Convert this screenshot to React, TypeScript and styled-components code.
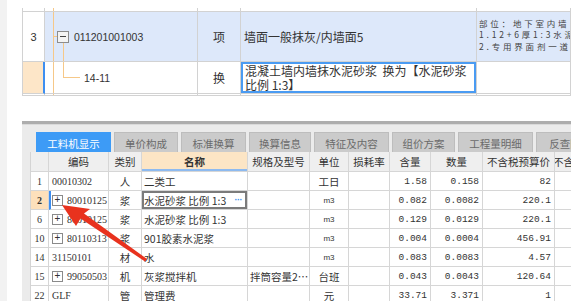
import styled, { createGlobalStyle } from "styled-components";

const Global = createGlobalStyle`
  html, body { margin: 0; padding: 0; background: #fff; }
  body {
    width: 571px;
    height: 301px;
    overflow: hidden;
    font-family: "Noto Sans CJK SC", "Liberation Sans", sans-serif;
    color: #333;
  }
`;

const Page = styled.div`
  position: relative;
  display: flex;
  width: 571px;
  height: 301px;
  overflow: hidden;
`;

const LeftStrip = styled.div`
  width: 7px;
  background: #f2f2f2;
  flex-shrink: 0;
`;

const Main = styled.div`
  flex: 1;
  min-width: 0;
  padding-left: 15px;
  display: flex;
  flex-direction: column;
`;

/* ---------- upper list ---------- */

const TopTable = styled.div`
  margin-top: 8px;
  display: grid;
  grid-template-columns: 22px 153px 43px 236px 1fr;
  grid-template-rows: 4px 50px 32px 2px;
  border-left: 1px solid #d2d2d2;
`;

const TCell = styled.div<{ $bg?: string; $center?: boolean }>`
  box-sizing: border-box;
  border-right: 1px solid #d2d2d2;
  border-bottom: 1px solid #d2d2d2;
  background-color: ${(p) => p.$bg ?? "#fff"};
  display: flex;
  align-items: center;
  justify-content: ${(p) => (p.$center ? "center" : "flex-start")};
  overflow: hidden;
  white-space: nowrap;
  font-size: 12px;
`;

const RowNo = styled(TCell)<{ $marked?: boolean }>`
  justify-content: center;
  font-family: "Liberation Sans", sans-serif;
  font-size: 11px;
  ${(p) => p.$marked && "border-right: 2px solid #3d8ef0;"}
`;

const orange = "#f6c888";

const TreeCell = styled(TCell)<{ $branch?: "open" | "leaf" }>`
  font-family: "Liberation Sans", sans-serif;
  font-size: 10.5px;
  background-image: linear-gradient(${orange}, ${orange}),
    linear-gradient(${orange}, ${orange}),
    linear-gradient(${orange}, ${orange});
  background-repeat: no-repeat;
  ${(p) =>
    p.$branch === "open"
      ? `background-size: 1px 100%, 4px 1px, 1px 19px;
         background-position: 8px 0, 8px 24px, 18px 31px;`
      : p.$branch === "leaf"
      ? `background-size: 1px 100%, 1px 15px, 17px 1px;
         background-position: 8px 0, 18px 0, 18px 15px;
         padding-left: 39px;`
      : `background-size: 1px 100%, 0 0, 0 0;
         background-position: 8px 0, 0 0, 0 0;`}
`;

const MinusBox = styled.span`
  box-sizing: border-box;
  flex-shrink: 0;
  width: 12px;
  height: 12px;
  margin: 0 5px 0 12px;
  border: 1px solid #8c8c8c;
  background: #f4f4f4;
  display: flex;
  align-items: center;
  justify-content: center;
  &::after {
    content: "";
    width: 6px;
    height: 1px;
    background: #444;
  }
`;

const NameEdit = styled(TCell)`
  box-shadow: inset 0 0 0 2px #4a9bf2;
  white-space: normal;
  font-size: 12px;
  line-height: 14px;
  padding: 1px 4px;
  align-items: center;
`;

const Desc = styled(TCell)`
  flex-direction: column;
  align-items: flex-start;
  justify-content: center;
  padding: 0 0 3px 2px;
  font-size: 8.5px;
  line-height: 11.5px;
  letter-spacing: 2.8px;
  color: #444;
`;

/* ---------- lower panel ---------- */

const Panel = styled.div`
  margin-top: 25px;
  flex: 1;
  min-height: 0;
  background: #ebebeb;
  border-top: 3px solid #adadad;
  display: flex;
  flex-direction: column;
  overflow: hidden;
`;

const TabBar = styled.div`
  box-sizing: border-box;
  height: 28px;
  padding: 7px 0 0 14px;
  display: flex;
  gap: 3px;
  border-top: 1px solid #dadada;
`;

const Tab = styled.div<{ $w: number; $active?: boolean }>`
  box-sizing: border-box;
  flex-shrink: 0;
  width: ${(p) => p.$w}px;
  height: 21px;
  display: flex;
  align-items: center;
  justify-content: center;
  font-size: 10.5px;
  background: ${(p) => (p.$active ? "#3d9bf6" : "#cbcbcb")};
  color: ${(p) => (p.$active ? "#fff" : "#6a6a6a")};
  border: 1px solid ${(p) => (p.$active ? "#3d9bf6" : "#bdbdbd")};
  border-bottom: none;
`;

const Grid = styled.div`
  margin-left: 8px;
  display: grid;
  grid-template-columns: 18px 60px 33px 106px 62px 39px 41px 41px 52px 72px 60px;
  grid-auto-rows: 19px;
  grid-template-rows: 20px;
  background: #fff;
  border-left: 1px solid #d4d4d4;
  width: max-content;
`;

const GCell = styled.div<{ $align?: "left" | "center" | "right"; $bg?: string }>`
  box-sizing: border-box;
  border-right: 1px solid #d6d6d6;
  border-bottom: 1px solid #d6d6d6;
  background: ${(p) => p.$bg ?? "#fff"};
  display: flex;
  align-items: center;
  justify-content: ${(p) =>
    p.$align === "right" ? "flex-end" : p.$align === "center" ? "center" : "flex-start"};
  padding: 0 2px;
  overflow: hidden;
  white-space: nowrap;
  font-size: 10.5px;
  color: #333;
`;

const Head = styled(GCell)<{ $sel?: boolean }>`
  justify-content: center;
  background: ${(p) => (p.$sel ? "#fce5c5" : "#efefef")};
  font-weight: ${(p) => (p.$sel ? 700 : 400)};
  ${(p) => p.$sel && "box-shadow: inset 0 -2px 0 #8dbaf0;"}
`;

const Num = styled(GCell)`
  justify-content: flex-end;
  font-family: "Liberation Mono", monospace;
  font-size: 9.5px;
  padding-right: 3px;
`;

const RowNum = styled(GCell)<{ $cur?: boolean }>`
  justify-content: center;
  padding: 0;
  font-family: "Liberation Serif", serif;
  font-size: 10px;
  background: ${(p) => (p.$cur ? "#fde0bb" : "#fff")};
  font-weight: ${(p) => (p.$cur ? 700 : 400)};
`;

const CodeCell = styled(GCell)<{ $cur?: boolean }>`
  font-family: "Liberation Serif", serif;
  font-size: 10px;
  padding-left: ${(p) => (p.$cur ? "1px" : "3px")};
  ${(p) => p.$cur && "border-left: 2px solid #3d8ef0;"}
`;

const PlusBox = styled.span`
  box-sizing: border-box;
  flex-shrink: 0;
  width: 11px;
  height: 11px;
  margin-right: 4px;
  border: 1px solid #8a8a8a;
  display: flex;
  align-items: center;
  justify-content: center;
  font-family: "Liberation Sans", sans-serif;
  font-size: 10px;
  line-height: 1;
  color: #333;
`;

const NameCell = styled(GCell)<{ $sel?: boolean }>`
  justify-content: space-between;
  ${(p) => p.$sel && "box-shadow: inset 0 0 0 2px #7b7b7b;"}
`;

const Dots = styled.span`
  color: #3d8ef0;
  font-family: "Liberation Sans", sans-serif;
  font-weight: 700;
  font-size: 9px;
  letter-spacing: -0.5px;
  margin-right: 3px;
`;

const Unit = styled(GCell)<{ $small?: boolean }>`
  justify-content: center;
  font-size: ${(p) => (p.$small ? "8px" : "10.5px")};
  font-family: ${(p) =>
    p.$small ? '"Liberation Sans", sans-serif' : '"Noto Sans CJK SC", sans-serif'};
`;

const ArrowLayer = styled.svg`
  position: absolute;
  left: 0;
  top: 0;
  pointer-events: none;
`;

const tabs: [string, number][] = [
  ["工料机显示", 75],
  ["单价构成", 64],
  ["标准换算", 65],
  ["换算信息", 62],
  ["特征及内容", 75],
  ["组价方案", 63],
  ["工程量明细", 75],
  ["反查图形工程量", 100],
];

const heads = [
  "",
  "编码",
  "类别",
  "名称",
  "规格及型号",
  "单位",
  "损耗率",
  "含量",
  "数量",
  "不含税预算价",
  "不含税市场价",
];

type Item = {
  no: string;
  code: string;
  plus?: boolean;
  kind: string;
  name: string;
  spec?: string;
  unit: string;
  qty: string;
  amount: string;
  price: string;
};

const items: Item[] = [
  { no: "1", code: "00010302", kind: "人", name: "二类工", unit: "工日", qty: "1.58", amount: "0.158", price: "82" },
  { no: "2", code: "80010125", plus: true, kind: "浆", name: "水泥砂浆 比例 1:3", unit: "m3", qty: "0.082", amount: "0.0082", price: "220.1" },
  { no: "6", code: "80010125", plus: true, kind: "浆", name: "水泥砂浆 比例 1:3", unit: "m3", qty: "0.129", amount: "0.0129", price: "220.1" },
  { no: "10", code: "80110313", plus: true, kind: "浆", name: "901胶素水泥浆", unit: "m3", qty: "0.004", amount: "0.0004", price: "456.91" },
  { no: "14", code: "31150101", kind: "材", name: "水", unit: "m3", qty: "0.083", amount: "0.0083", price: "4.57" },
  { no: "15", code: "99050503", plus: true, kind: "机", name: "灰浆搅拌机", spec: "拌筒容量2…", unit: "台班", qty: "0.043", amount: "0.0043", price: "120.64" },
  { no: "22", code: "GLF", kind: "管", name: "管理费", unit: "元", qty: "33.71", amount: "3.371", price: "1" },
];

const blue = "#dde8fa";

export default function App() {
  return (
    <Page>
      <Global />
      <LeftStrip />
      <Main>
        <TopTable>
          <RowNo />
          <TreeCell />
          <TCell />
          <TCell />
          <TCell />

          <RowNo>3</RowNo>
          <TreeCell $bg={blue} $branch="open">
            <MinusBox />
            011201001003
          </TreeCell>
          <TCell $bg={blue} $center>
            项
          </TCell>
          <TCell $bg={blue} style={{ paddingLeft: 3 }}>
            墙面一般抹灰/内墙面5
          </TCell>
          <Desc $bg={blue}>
            <div>部位：地下室内墙</div>
            <div>1.12+6厚1:3水泥砂浆</div>
            <div>2.专用界面剂一道</div>
          </Desc>

          <RowNo $bg="#fde6c8" $marked />
          <TreeCell $branch="leaf">14-11</TreeCell>
          <TCell $center>换</TCell>
          <NameEdit>混凝土墙内墙抹水泥砂浆&nbsp;&nbsp;换为【水泥砂浆 比例 1:3】</NameEdit>
          <TCell />

          <RowNo />
          <TreeCell />
          <TCell />
          <TCell />
          <TCell />
        </TopTable>

        <Panel>
          <TabBar>
            {tabs.map(([t, w], i) => (
              <Tab key={t} $w={w} $active={i === 0}>
                {t}
              </Tab>
            ))}
          </TabBar>
          <Grid>
            {heads.map((h, i) => (
              <Head key={i} $sel={h === "名称"}>
                {h}
              </Head>
            ))}
            {items.map((r) => {
              const cur = r.no === "2";
              return [
                <RowNum key={r.no + "n"} $cur={cur}>
                  {r.no}
                </RowNum>,
                <CodeCell key={r.no + "c"} $cur={cur}>
                  {r.plus && <PlusBox>+</PlusBox>}
                  {r.code}
                </CodeCell>,
                <GCell key={r.no + "k"} $align="center">
                  {r.kind}
                </GCell>,
                <NameCell key={r.no + "m"} $sel={cur}>
                  <span>{r.name}</span>
                  {cur && <Dots>···</Dots>}
                </NameCell>,
                <GCell key={r.no + "s"}>{r.spec ?? ""}</GCell>,
                <Unit key={r.no + "u"} $small={r.unit === "m3"}>
                  {r.unit}
                </Unit>,
                <GCell key={r.no + "l"} />,
                <Num key={r.no + "q"}>{r.qty}</Num>,
                <Num key={r.no + "a"}>{r.amount}</Num>,
                <Num key={r.no + "p"}>{r.price}</Num>,
                <GCell key={r.no + "x"} />,
              ];
            })}
          </Grid>
        </Panel>
      </Main>

      <ArrowLayer width={571} height={301} viewBox="0 0 571 301">
        <polygon
          fill="#e8321e"
          points="62,205 90,209 84,213.5 147,259 145,261.5 80.5,218.5 76,226"
        />
      </ArrowLayer>
    </Page>
  );
}
